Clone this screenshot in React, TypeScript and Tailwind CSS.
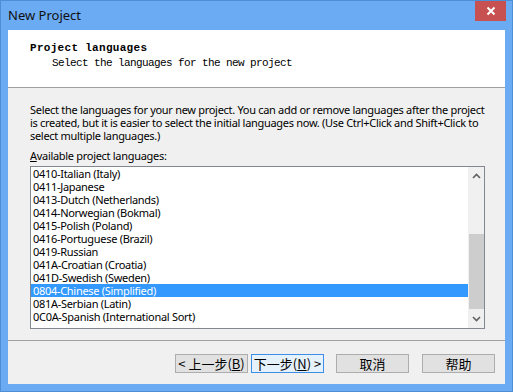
import React from "react";

const languages = [
	"0410-Italian (Italy)",
	"0411-Japanese",
	"0413-Dutch (Netherlands)",
	"0414-Norwegian (Bokmal)",
	"0415-Polish (Poland)",
	"0416-Portuguese (Brazil)",
	"0419-Russian",
	"041A-Croatian (Croatia)",
	"041D-Swedish (Sweden)",
	"0804-Chinese (Simplified)",
	"081A-Serbian (Latin)",
	"0C0A-Spanish (International Sort)",
];

const selected = "0804-Chinese (Simplified)";

const sans = { fontFamily: '"Noto Sans", "Noto Sans CJK SC", sans-serif' };

const Button: React.FC<{ children: React.ReactNode; focused?: boolean }> = ({ children, focused }) => {
	return (
		<button
			className={
				focused
					? "w-[73px] h-[19px] border border-[#3c8ee6] bg-[#e5f1fb] text-[13px] leading-[17px] text-black flex items-center justify-center whitespace-pre"
					: "w-[73px] h-[19px] border border-[#adadad] bg-[#e1e1e1] text-[13px] leading-[17px] text-black flex items-center justify-center whitespace-pre"
			}
			style={{ fontFamily: '"Noto Sans CJK SC", "Noto Sans", sans-serif' }}
		>
			{children}
		</button>
	);
};

const App: React.FC = () => {
	return (
		<div className="w-[513px] h-[392px] bg-[#6aabf3] border border-[#4d8fd6] flex flex-col" style={sans}>
			{/* title bar */}
			<div className="h-[29px] flex items-start justify-between">
				<div className="pl-[7px] pt-[5px] text-[13px] leading-[18px] text-[#111]">New Project</div>
				<div className="w-[31px] h-[20px] mr-[6px] bg-[#c75050] flex items-center justify-center">
					<svg width="10" height="10" viewBox="0 0 10 10">
						<path d="M1.5 1.5 L8.5 8.5 M8.5 1.5 L1.5 8.5" stroke="white" strokeWidth="2" />
					</svg>
				</div>
			</div>

			{/* client */}
			<div className="flex-1 mx-[7px] mb-[7px] bg-[#f0f0f0] flex flex-col">
				<div className="h-[58px] bg-white border-b border-[#a0a0a0] pt-[11px] pl-[22px]" style={{ fontFamily: '"Liberation Mono", monospace' }}>
					<div className="text-[11px] leading-[15px] font-bold tracking-[0.3px] text-black">Project languages</div>
					<div className="text-[11px] leading-[15px] tracking-[-0.6px] text-black pl-[22px]">
						Select the languages for the new project
					</div>
				</div>

				<div className="pl-[22px] pr-[20px] pt-[15px] text-[11px] leading-[13px] text-black tracking-[-0.3px]">
					<p className="whitespace-nowrap">
						Select the languages for your new project. You can add or remove languages after the project
						<br />
						is created, but it is easier to select the initial languages now. (Use Ctrl+Click and Shift+Click to
						<br />
						select multiple languages.)
					</p>
					<div className="mt-[7px]">
						<span className="underline">A</span>vailable project languages:
					</div>

					<div className="mt-[4px] w-[455px] h-[163px] border border-[#828790] bg-white flex">
						<div className="flex-1 flex flex-col">
							{languages.map((lang) => (
								<div
									key={lang}
									className={
										lang === selected
											? "h-[13px] leading-[13px] pl-[2px] bg-[#3399ff] text-white whitespace-nowrap"
											: "h-[13px] leading-[13px] pl-[2px] text-black whitespace-nowrap"
									}
								>
									{lang}
								</div>
							))}
						</div>
						<div className="w-[16px] bg-[#f0f0f0] flex flex-col items-center">
							<div className="h-[17px] flex items-center justify-center">
								<svg width="9" height="6" viewBox="0 0 9 6">
									<path d="M1 5 L4.5 1.5 L8 5" stroke="#606060" strokeWidth="1.6" fill="none" />
								</svg>
							</div>
							<div className="h-[50px]" />
							<div className="w-[15px] h-[75px] bg-[#cdcdcd]" />
							<div className="flex-1 flex items-center justify-center">
								<svg width="9" height="6" viewBox="0 0 9 6">
									<path d="M1 1 L4.5 4.5 L8 1" stroke="#606060" strokeWidth="1.6" fill="none" />
								</svg>
							</div>
						</div>
					</div>
				</div>

				<div className="mt-[11px] border-t border-[#a0a0a0]" />

				<div className="flex justify-end pr-[10px] pt-[13px]">
					<div className="flex gap-[3px]">
						<Button>{"< 上一步("}<span className="underline">B</span>{")"}</Button>
						<Button focused>{"下一步("}<span className="underline">N</span>{") >"}</Button>
					</div>
					<div className="ml-[12px] flex gap-[13px]">
						<Button>取消</Button>
						<Button>帮助</Button>
					</div>
				</div>
			</div>
		</div>
	);
};

export default App;
